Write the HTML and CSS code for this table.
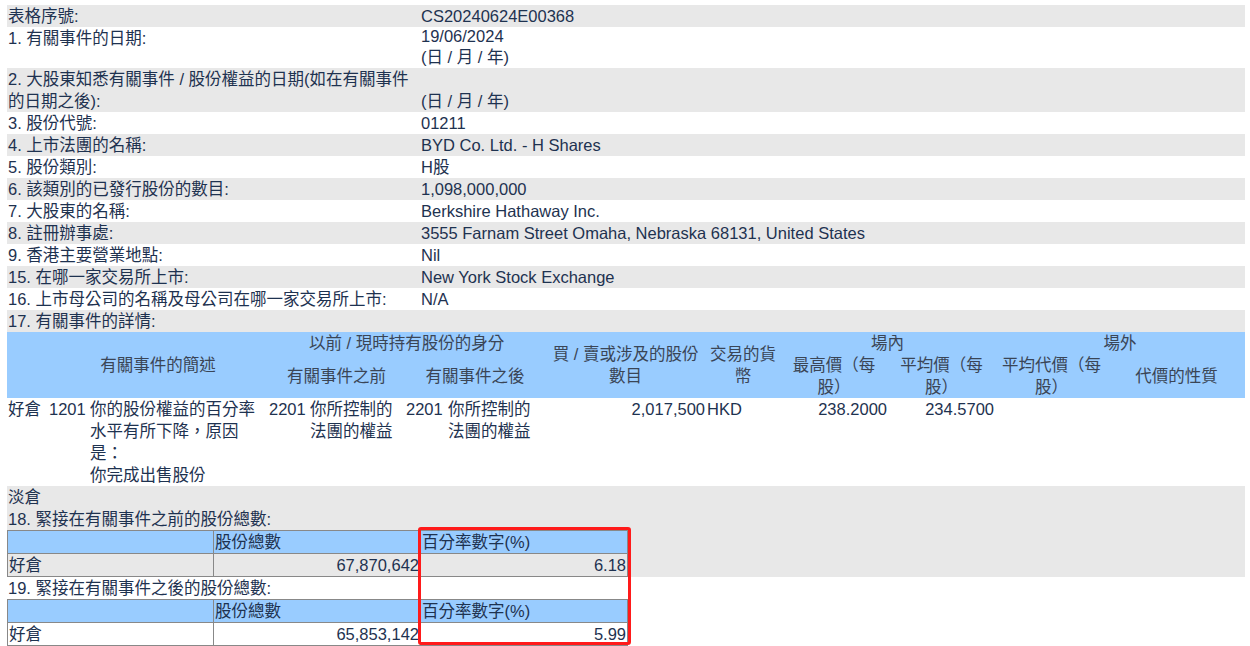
FILE: index.html
```html
<!DOCTYPE html>
<html lang="zh-Hant">
<head>
<meta charset="utf-8">
<title>表格序號 CS20240624E00368</title>
<link rel="stylesheet" href="styles.css">
</head>
<body>
<div class="page">
  <div class="row alt"><div class="lbl">表格序號:</div><div class="val">CS20240624E00368</div></div>
  <div class="row"><div class="lbl">1. 有關事件的日期:</div><div class="val"><div class="latin">19/06/2024</div><div>(日 / 月 / 年)</div></div></div>
  <div class="row alt"><div class="lbl">2. 大股東知悉有關事件 / 股份權益的日期(如在有關事件<br>的日期之後):</div><div class="val"><div>&nbsp;</div><div>(日 / 月 / 年)</div></div></div>
  <div class="row"><div class="lbl">3. 股份代號:</div><div class="val">01211</div></div>
  <div class="row alt"><div class="lbl">4. 上市法團的名稱:</div><div class="val">BYD Co. Ltd. - H Shares</div></div>
  <div class="row"><div class="lbl">5. 股份類別:</div><div class="val">H股</div></div>
  <div class="row alt"><div class="lbl">6. 該類別的已發行股份的數目:</div><div class="val">1,098,000,000</div></div>
  <div class="row"><div class="lbl">7. 大股東的名稱:</div><div class="val">Berkshire Hathaway Inc.</div></div>
  <div class="row alt"><div class="lbl">8. 註冊辦事處:</div><div class="val">3555 Farnam Street Omaha, Nebraska 68131, United States</div></div>
  <div class="row"><div class="lbl">9. 香港主要營業地點:</div><div class="val">Nil</div></div>
  <div class="row alt"><div class="lbl">15. 在哪一家交易所上市:</div><div class="val">New York Stock Exchange</div></div>
  <div class="row"><div class="lbl">16. 上市母公司的名稱及母公司在哪一家交易所上市:</div><div class="val">N/A</div></div>
  <div class="full alt">17. 有關事件的詳情:</div>

  <table class="detail">
    <colgroup>
      <col style="width:41px"><col style="width:41px"><col style="width:179px">
      <col style="width:41px"><col style="width:96px"><col style="width:42px"><col style="width:98px">
      <col style="width:161px"><col style="width:74px">
      <col style="width:108px"><col style="width:107px"><col style="width:113px"><col style="width:137px">
    </colgroup>
    <thead>
      <tr class="h1">
        <th rowspan="2"></th>
        <th colspan="2" rowspan="2">有關事件的簡述</th>
        <th colspan="4">以前 / 現時持有股份的身分</th>
        <th rowspan="2">買 / 賣或涉及的股份數目</th>
        <th rowspan="2">交易的貨幣</th>
        <th colspan="2">場內</th>
        <th colspan="2">場外</th>
      </tr>
      <tr class="h2">
        <th colspan="2">有關事件之前</th>
        <th colspan="2">有關事件之後</th>
        <th>最高價（每股）</th>
        <th>平均價（每股）</th>
        <th>平均代價（每股）</th>
        <th>代價的性質</th>
      </tr>
    </thead>
    <tbody>
      <tr>
        <td>好倉</td>
        <td>1201</td>
        <td>你的股份權益的百分率水平有所下降，原因是：<br>你完成出售股份</td>
        <td>2201</td>
        <td>你所控制的法團的權益</td>
        <td>2201</td>
        <td>你所控制的法團的權益</td>
        <td class="num">2,017,500</td>
        <td>HKD</td>
        <td class="num">238.2000</td>
        <td class="num">234.5700</td>
        <td></td>
        <td></td>
      </tr>
    </tbody>
  </table>

  <div class="block alt">
    <div class="line">淡倉</div>
    <div class="line">18. 緊接在有關事件之前的股份總數:</div>
    <table class="totals">
      <colgroup><col style="width:206px"><col style="width:207px"><col style="width:207px"></colgroup>
      <tr class="th"><td></td><td>股份總數</td><td>百分率數字(%)</td></tr>
      <tr><td>好倉</td><td class="num">67,870,642</td><td class="num">6.18</td></tr>
    </table>
  </div>
  <div class="block">
    <div class="line">19. 緊接在有關事件之後的股份總數:</div>
    <table class="totals">
      <colgroup><col style="width:206px"><col style="width:207px"><col style="width:207px"></colgroup>
      <tr class="th"><td></td><td>股份總數</td><td>百分率數字(%)</td></tr>
      <tr><td>好倉</td><td class="num">65,853,142</td><td class="num">5.99</td></tr>
    </table>
  </div>

  <div class="highlight"></div>
</div>
</body>
</html>
```

FILE: styles.css
```css
html, body {
  margin: 0;
  padding: 0;
  background: #ffffff;
}
body {
  font-family: "Liberation Sans", Arial, "Noto Sans CJK TC", sans-serif;
  font-size: 16.5px;
  line-height: 22px;
  color: #1e3250;
  text-spacing-trim: space-all;
}
.page {
  position: relative;
  width: 1238px;
  margin: 5px 5px 0 7px;
}
.alt {
  background: #e8e8e8;
}
.row {
  display: grid;
  grid-template-columns: 413px 1fr;
}
.lbl, .val {
  padding-left: 1px;
}
.val .latin {
  line-height: 19px;
}
.full {
  padding-left: 1px;
}
.detail {
  width: 1238px;
  table-layout: fixed;
  border-collapse: collapse;
  border-spacing: 0;
}
.detail th {
  background: #99ccff;
  font-weight: normal;
  color: #3a4556;
  text-align: center;
  vertical-align: middle;
  padding: 0 1px;
}
.detail .h1 th { height: 22px; }
.detail .h2 th { height: 44px; }
.detail td {
  vertical-align: top;
  padding: 0 1px;
  text-align: left;
}
.detail td.num,
.totals td.num {
  text-align: right;
}
.block .line {
  padding-left: 1px;
}
.totals {
  width: 620px;
  table-layout: fixed;
  border-collapse: collapse;
}
.totals td {
  border: 1px solid #888888;
  padding: 0 1px;
  height: 22px;
  line-height: 22px;
}
.totals .th td {
  background: #99ccff;
}
.highlight {
  position: absolute;
  left: 411px;
  top: 522px;
  width: 207px;
  height: 112px;
  border: 3px solid #ff1a1a;
  border-radius: 3px;
  pointer-events: none;
}
```
